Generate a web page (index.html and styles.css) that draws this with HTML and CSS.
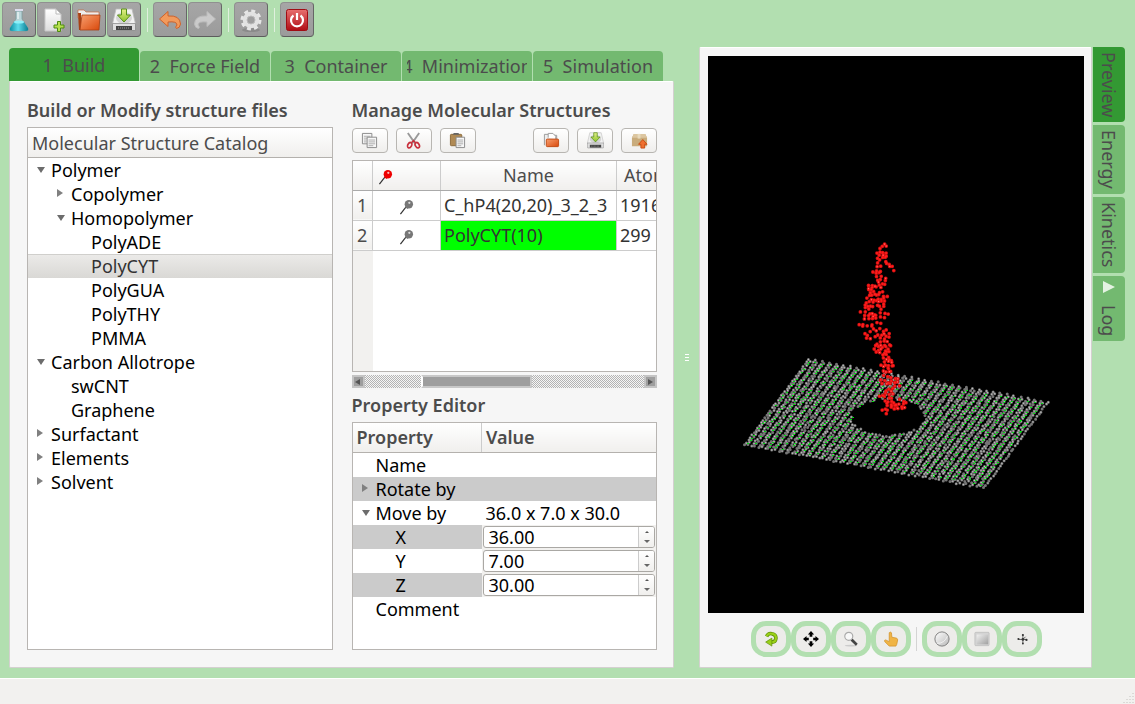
FILE: index.html
```html
<!DOCTYPE html>
<html lang="en">
<head>
<meta charset="utf-8">
<title>Molecular Builder</title>
<link rel="stylesheet" href="styles.css">
</head>
<body>
<svg class="defs" aria-hidden="true">
  <defs>
    <linearGradient id="gOrange" x1="0" y1="0" x2="1" y2="1"><stop offset="0" stop-color="#f8a070"/><stop offset="1" stop-color="#d9480a"/></linearGradient>
    <linearGradient id="gPaper" x1="0" y1="0" x2="0" y2="1"><stop offset="0" stop-color="#fff"/><stop offset="1" stop-color="#dcdcdc"/></linearGradient>
    <linearGradient id="gGreen" x1="0" y1="0" x2="0" y2="1"><stop offset="0" stop-color="#e4f08a"/><stop offset="1" stop-color="#8cc42a"/></linearGradient>
    <linearGradient id="gRed" x1="0" y1="0" x2="0" y2="1"><stop offset="0" stop-color="#e87070"/><stop offset="1" stop-color="#b00c14"/></linearGradient>
    <linearGradient id="gLiquid" x1="0" y1="0" x2="1" y2="0"><stop offset="0" stop-color="#0a8ca0"/><stop offset=".45" stop-color="#5cdcec"/><stop offset="1" stop-color="#0a7c90"/></linearGradient>
    <linearGradient id="gSteel" x1="0" y1="0" x2="1" y2="1"><stop offset="0" stop-color="#fff"/><stop offset="1" stop-color="#b8b8b8"/></linearGradient>
    <linearGradient id="gCube" x1="0" y1="0" x2="1" y2="1"><stop offset="0" stop-color="#f0f0f0"/><stop offset="1" stop-color="#a0a0a0"/></linearGradient>
    <symbol id="drive" viewBox="0 0 24 24">
      <path d="M4 1h16l3.500 15H.5z" fill="#f2f2f2" stroke="#bbb" stroke-width=".8"/>
      <ellipse cx="12" cy="10" rx="8" ry="6" fill="#d4d4d4"/>
      <path d="M.5 15.500h23v6q0 1-1 1h-21q-1 0-1-1z" fill="#dedede" stroke="#777" stroke-width=".6"/>
      <path d="M4 18h16v4H4z" fill="#444"/><path d="M6 20h12" stroke="#999" stroke-dasharray="1 1"/>
      <path d="M9.500 1h5v6h4L12 14 5.500 7h4z" fill="url(#gGreen)" stroke="#589018"/>
    </symbol>
    <symbol id="folder" viewBox="0 0 24 24">
      <path d="M1 5V2h6l2 2h13v6H1z" fill="#eee" stroke="#c76a40" stroke-width=".7"/>
      <path d="M1 5h3v17H2z" fill="#a84014"/>
      <path d="M5 7h18l-1 15H3z" fill="url(#gOrange)" stroke="#a84014" stroke-width=".8"/>
    </symbol>
    <symbol id="pin" viewBox="0 0 16 16">
      <path d="M1.500 15.500L9 6" stroke="#333" stroke-width="1.300"/><path d="M7.500 7l2.500 2" stroke="currentColor" stroke-width="3"/>
      <circle cx="10.500" cy="5" r="4.500" fill="currentColor"/><circle cx="11" cy="3.500" r="1.200" fill="#fff" opacity=".75"/>
    </symbol>
    <symbol id="docs" viewBox="0 0 18 18">
      <path d="M1.500 1.500h10v11h-10z" fill="#f7f7f7" stroke="#888"/>
      <path d="M3 4.500h7M3 6.500h7M3 8.500h3M3 10.500h3" stroke="#aaa"/>
      <path d="M6.500 5.500h10v11h-10z" fill="#f7f7f7" stroke="#888"/>
      <path d="M8 8.500h7M8 10.500h7M8 12.500h7M8 14.500h5" stroke="#aaa"/>
    </symbol>
  </defs>
</svg>

<header class="toolbar" role="toolbar" aria-label="Main">
  <button class="tool" aria-label="New project"><svg viewBox="0 0 24 24"><path d="M9 3h6v8l6 9q1 3-2 3H5q-3 0-2-3l6-9z" fill="#b9d4d8" stroke="#7c9ca0" stroke-width=".8"/><path d="M7 14h10l4 6q1 3-2 3H5q-3 0-2-3z" fill="url(#gLiquid)"/><ellipse cx="12" cy="14" rx="5" ry="1.500" fill="#8ef0f8"/><path d="M8 2h8" stroke="#dde" stroke-width="2"/><path d="M11 4v7" stroke="#fff"/></svg></button>
  <button class="tool" aria-label="New file"><svg viewBox="0 0 24 24"><path d="M3 1h11l5 5v17H3z" fill="url(#gPaper)" stroke="#c8c8c8"/><path d="M14 1v5h5z" fill="#fff" stroke="#bbb"/><path d="M15.500 13.500h3v3.500h3.500v3h-3.500v3.500h-3v-3.500H12v-3h3.500z" fill="#b6e04e" stroke="#4c8a10"/></svg></button>
  <button class="tool" aria-label="Open"><svg><use href="#folder"/></svg></button>
  <button class="tool" aria-label="Save"><svg><use href="#drive"/></svg></button>
  <span class="divider"></span>
  <button class="tool" aria-label="Undo"><svg viewBox="0 0 24 24"><path d="M1.500 11L10 3.500V8q12-1 12.500 8-.5 4-4 4.500-2-1 .5-3.500Q19 13 10 14v4.500z" fill="#f29a5c" stroke="#d0622a"/></svg></button>
  <button class="tool" aria-label="Redo"><svg viewBox="0 0 24 24"><path d="M22.500 11L14 3.500V8Q2 7 1.500 16q.5 4 4 4.500 2-1-.5-3.500Q5 13 14 14v4.500z" fill="#cacaca" stroke="#bcbcbc"/></svg></button>
  <span class="divider"></span>
  <button class="tool" aria-label="Settings"><svg viewBox="0 0 24 24"><ellipse cx="12" cy="22" rx="9" ry="2" fill="#777" opacity=".5"/><circle cx="12" cy="12" r="8.500" fill="none" stroke="#e6e6e6" stroke-width="4" stroke-dasharray="3.700 2.970"/><circle cx="12" cy="12" r="6" fill="none" stroke="#e2e2e2" stroke-width="4.500"/><circle cx="12" cy="12" r="4" fill="#9e9e9e" stroke="#bbb"/></svg></button>
  <span class="divider"></span>
  <button class="tool" aria-label="Quit"><svg viewBox="0 0 24 24"><rect x="1.500" y="1.500" width="21" height="21" rx="2" fill="url(#gRed)" stroke="#a00c14"/><path d="M8.500 7.500a6 6 0 1 0 7 0M12 5v7" fill="none" stroke="#fff" stroke-width="2.200"/></svg></button>
</header>

<main class="workspace">
  <section class="builder">
    <div class="tabs" role="tablist">
      <button class="tab tab-on" role="tab" aria-selected="true"><span>1  Build</span></button>
      <button class="tab" role="tab"><span>2  Force Field</span></button>
      <button class="tab" role="tab"><span>3  Container</span></button>
      <button class="tab" role="tab"><span>4  Minimization</span></button>
      <button class="tab" role="tab"><span>5  Simulation</span></button>
    </div>
    <div class="panel columns">
      <section class="column">
        <h2 class="heading">Build or Modify structure files</h2>
        <div class="box grow">
          <div class="box-head"><span class="head-cell">Molecular Structure Catalog</span></div>
          <ul class="tree">
            <li class="lv1 open">Polymer</li>
            <li class="lv2 shut">Copolymer</li>
            <li class="lv2 open">Homopolymer</li>
            <li class="lv3">PolyADE</li>
            <li class="lv3 picked">PolyCYT</li>
            <li class="lv3">PolyGUA</li>
            <li class="lv3">PolyTHY</li>
            <li class="lv3">PMMA</li>
            <li class="lv1 open">Carbon Allotrope</li>
            <li class="lv2">swCNT</li>
            <li class="lv2">Graphene</li>
            <li class="lv1 shut">Surfactant</li>
            <li class="lv1 shut">Elements</li>
            <li class="lv1 shut">Solvent</li>
          </ul>
        </div>
      </section>

      <section class="column">
        <h2 class="heading">Manage Molecular Structures</h2>
        <div class="actions">
          <button class="action" aria-label="Copy"><svg><use href="#docs"/></svg></button>
          <button class="action" aria-label="Cut"><svg viewBox="0 0 18 18"><path d="M3 1l7.500 11M15 1L7.500 12" stroke="#999" stroke-width="2"/><ellipse cx="5" cy="14" rx="2" ry="3" transform="rotate(30 5 14)" fill="none" stroke="#c8303c" stroke-width="1.800"/><ellipse cx="13" cy="14" rx="2" ry="3" transform="rotate(-30 13 14)" fill="none" stroke="#c8303c" stroke-width="1.800"/><path d="M7 11l2-2 2 2" fill="none" stroke="#c8303c" stroke-width="1.500"/></svg></button>
          <button class="action" aria-label="Paste"><svg viewBox="0 0 18 18"><rect x="1.500" y="2.500" width="12" height="12" rx="1" fill="#b08a54" stroke="#8a6838"/><path d="M4 3l1-2h5l1 2z" fill="#666"/><path d="M7.500 5.500h9v11h-9z" fill="#f7f7f7" stroke="#888"/><path d="M9 8.500h6M9 10.500h6M9 12.500h6M9 14.500h4" stroke="#aaa"/></svg></button>
          <span class="spring"></span>
          <button class="action" aria-label="Open structure"><svg viewBox="0 0 18 18"><path d="M1.500 14V2.500h4l1 1h8V9" fill="#eee" stroke="#999"/><path d="M5.500 6V1.500h5l3 3V8" fill="#fff" stroke="#999"/><rect x="3.500" y="7.500" width="13" height="8" rx="1" fill="url(#gOrange)" stroke="#c04a14"/></svg></button>
          <button class="action" aria-label="Save structure"><svg><use href="#drive"/></svg></button>
          <button class="action" aria-label="Export"><svg viewBox="0 0 18 18"><path d="M3 2h12l2 4v9H1V6z" fill="#c9ac7c"/><path d="M3 2h12l2 4H1z" fill="#dcc6a0"/><path d="M7 2h3v5H7z" fill="#e8dabc"/><path d="M12.500 8l4.500 5h-2.500v4h-4v-4H8z" fill="#f07030" stroke="#c84c10"/></svg></button>
        </div>
        <div class="box structures">
          <table class="grid">
            <colgroup><col class="c-num"><col class="c-pin"><col class="c-name"><col class="c-atoms"></colgroup>
            <thead><tr><th></th><th class="pin-head"><svg class="pin red"><use href="#pin"/></svg></th><th>Name</th><th class="cut">Atoms</th></tr></thead>
            <tbody>
              <tr><th>1</th><td class="mid"><svg class="pin"><use href="#pin"/></svg></td><td>C_hP4(20,20)_3_2_3</td><td>1916</td></tr>
              <tr><th>2</th><td class="mid"><svg class="pin"><use href="#pin"/></svg></td><td class="lime">PolyCYT(10)</td><td>299</td></tr>
            </tbody>
          </table>
          <div class="gutter"></div>
        </div>
        <div class="scroll">
          <button class="scroll-btn" aria-label="Scroll left"><svg viewBox="0 0 8 8"><path d="M6 1v6L1 4z"/></svg></button>
          <span class="track-a"></span><span class="thumb"></span><span class="track-b"></span>
          <button class="scroll-btn" aria-label="Scroll right"><svg viewBox="0 0 8 8"><path d="M2 1v6l5-3z"/></svg></button>
        </div>
        <h2 class="heading">Property Editor</h2>
        <div class="box grow">
          <table class="props">
            <colgroup><col class="p-key"><col></colgroup>
            <thead><tr><th>Property</th><th>Value</th></tr></thead>
            <tbody>
              <tr><td class="lv1">Name</td><td></td></tr>
              <tr class="alt"><td class="lv1 shut">Rotate by</td><td></td></tr>
              <tr><td class="lv1 open">Move by</td><td>36.0 x 7.0 x 30.0</td></tr>
              <tr class="altkey"><td class="lv2"><label for="px">X</label></td><td class="edit"><div class="spin"><input id="px" value="36.00"><span class="steps"><button aria-label="Increase X"></button><button class="down" aria-label="Decrease X"></button></span></div></td></tr>
              <tr><td class="lv2"><label for="py">Y</label></td><td class="edit"><div class="spin"><input id="py" value="7.00"><span class="steps"><button aria-label="Increase Y"></button><button class="down" aria-label="Decrease Y"></button></span></div></td></tr>
              <tr class="altkey"><td class="lv2"><label for="pz">Z</label></td><td class="edit"><div class="spin"><input id="pz" value="30.00"><span class="steps"><button aria-label="Increase Z"></button><button class="down" aria-label="Decrease Z"></button></span></div></td></tr>
              <tr><td class="lv1">Comment</td><td></td></tr>
            </tbody>
          </table>
        </div>
      </section>
    </div>
  </section>

  <div class="splitter"><i></i><i></i><i></i></div>

  <section class="panel viewer">
    <svg class="scene" id="scene" viewBox="0 0 376 557" role="img" aria-label="Molecule preview"></svg>
    <div class="view-tools">
      <button class="view-btn" aria-label="Rotate"><svg viewBox="0 0 18 18"><path d="M4 6Q6 2 10 3q5 1 4.500 5.500T9 12.500" fill="none" stroke="#5f8f08" stroke-width="4"/><path d="M4 6Q6 2 10 3q5 1 4.500 5.500T9 12.500" fill="none" stroke="#9ad018" stroke-width="2.400"/><path d="M10 8v9l-7-4.500z" fill="#9ad018" stroke="#5f8f08" stroke-width=".8"/></svg></button>
      <button class="view-btn" aria-label="Move"><svg viewBox="0 0 18 18"><path d="M9 0l3.500 4h-2v2.500h-3V4h-2zM9 18l3.500-4h-2v-2.500h-3V14h-2zM0 9l4-3.500v2h2.500v3H4v2zM18 9l-4-3.500v2h-2.500v3H14v2z"/></svg></button>
      <button class="view-btn" aria-label="Zoom"><svg viewBox="0 0 18 18"><ellipse cx="9" cy="16.500" rx="7" ry="1" fill="#ccc"/><path d="M9.500 9.500l6 6" stroke="#444" stroke-width="3"/><circle cx="6.500" cy="6" r="4.500" fill="#f8f8f8" stroke="#aaa" stroke-width="1.300"/></svg></button>
      <button class="view-btn" aria-label="Pick"><svg viewBox="0 0 18 18"><path d="M7 2q1.500-1.500 2.500 0l.5 5 5 1q1.500.5 1.500 2l-1 5-1 2H7l-5-5q-1-2 1-2l4 2z" fill="#f0b445" stroke="#d09028" stroke-width=".8"/></svg></button>
      <span class="divider dark"></span>
      <button class="view-btn" aria-label="Sphere"><svg viewBox="0 0 18 18"><circle cx="9" cy="9" r="8" fill="url(#gSteel)" stroke="#777"/><path d="M3 14q9 0 12-8" fill="none" stroke="#fff" stroke-width="1" opacity=".7"/></svg></button>
      <button class="view-btn" aria-label="Box"><svg viewBox="0 0 18 18"><rect x="1" y="1.500" width="16" height="15" rx="1" fill="#d4d4d4" stroke="#bbb" stroke-width=".8"/><rect x="3" y="4" width="13" height="11" fill="url(#gCube)"/></svg></button>
      <button class="view-btn" aria-label="Axes"><svg viewBox="0 0 18 18"><path d="M10 4v11M5 9.500h9M10 9.500l3-3" stroke="#555"/><g fill="#333"><circle cx="10" cy="4.500" r="1.200"/><circle cx="10" cy="14" r="1"/><circle cx="5" cy="9" r="1.200"/><circle cx="14" cy="10" r="1.300"/><circle cx="10" cy="9.500" r="1.500"/></g></svg></button>
    </div>
  </section>

  <nav class="side-tabs" role="tablist">
    <button class="side side-on" role="tab" aria-selected="true">Preview</button>
    <button class="side" role="tab">Energy</button>
    <button class="side" role="tab">Kinetics</button>
    <button class="side" role="tab"><svg class="play" viewBox="0 0 12 12"><path d="M0 0l12 6-12 6z" fill="#e4f2e2"/></svg>Log</button>
  </nav>
</main>

<footer class="status"><svg class="grip" viewBox="0 0 12 12"><path d="M10 1v11M7 4v8M4 7v5M1 10v2" stroke="#c4c2be" stroke-dasharray="1 2"/></svg></footer>
<script src="scene.js"></script>
</body>
</html>
```
FILE: styles.css
```css
* { box-sizing: border-box; }
body {
  margin: 0;
  min-height: 100vh;
  display: flex;
  flex-direction: column;
  background: #b2dfb0;
  font: 18px/24px "Noto Sans", "Open Sans", sans-serif;
  color: #000;
}
button, input { font: inherit; color: inherit; padding: 0; margin: 0; }
.defs { position: absolute; width: 0; height: 0; }

.toolbar { display: flex; align-items: center; gap: 1px; padding: 2px; height: 39px; }
.tool {
  display: grid; place-items: center;
  width: 34px; height: 35px;
  background: linear-gradient(#a6a6a6, #9b9b9b);
  border: 1px solid #888; border-color: #909090 #666 #5c5c5c #909090;
  border-radius: 4px;
}
.tool svg { width: 24px; height: 24px; }
.divider { width: 1px; height: 24px; margin: 0 4px 0 5px; background: #e0f0de; }
.dark { background: #d4d4d4; }

.workspace {
  flex: 1;
  display: grid;
  grid-template-columns: minmax(0, 665fr) 25px minmax(0, 393fr) 33px;
  padding: 8px 10px 10px 9px;
}
.builder { display: flex; flex-direction: column; }
.tabs { display: flex; align-items: flex-end; gap: 1px; height: 34px; padding: 1px 11px 0 0; }
.tab {
  flex: 1 1 0; min-width: 0; height: 30px; padding: 0 5px;
  background: #73b970; color: #4c4c4c;
  border: 0; border-radius: 4px 4px 0 0;
}
.tab span { display: flex; justify-content: center; overflow: hidden; white-space: pre; }
.tab-on { height: 33px; background: #339933; }
.panel { background: #f6f6f6; border: 1px solid #d4d0d0; border-top-color: #fff; border-radius: 2px; }
.columns { flex: 1; display: grid; grid-template-columns: 1fr 1fr; gap: 19px; padding: 17px 16px 17px 17px; }
.column { display: flex; flex-direction: column; min-width: 0; }
.heading { margin: 0 0 6px; font-size: 18px; line-height: 22px; font-weight: 600; color: #4c4c4c; white-space: nowrap; }

.box { background: #fff; border: 1px solid #b8b5b2; overflow: hidden; }
.grow { flex: 1; }
.box-head { height: 30px; background: linear-gradient(#fff, #f0efed); border-bottom: 1px solid #b4b1ad; color: #4c4c4c; }
.head-cell { display: block; padding: 3px 4px; }
.tree { list-style: none; margin: 0; padding: 0; }
.lv1 { padding-left: 23px; }
.lv2 { padding-left: 43px; }
.lv3 { padding-left: 63px; }
.open::before, .shut::before {
  content: ""; display: inline-block; margin: 0 8px 0 -14px;
  border: solid transparent; vertical-align: 4px;
}
.open::before { border-width: 6px 4px 0; border-top-color: #6c6c6c; margin-right: 6px; }
.shut::before { border-width: 4px 0 4px 6px; border-left-color: #808080; }
.picked { background: linear-gradient(#ebeae8, #d9d8d5); border-top: 1px solid #d0cfcc; color: #333; line-height: 23px; }

.actions { display: flex; gap: 8px; margin: 1px 0 7px; }
.action {
  display: grid; place-items: center; width: 36px; height: 25px;
  background: linear-gradient(#fff, #efeeec);
  border: 1px solid #b8b6b2; border-radius: 4px;
}
.action svg { width: 17px; height: 17px; }
.spring { flex: 1; margin-right: -8px; }

.structures { height: 212px; display: flex; flex-direction: column; }
.grid { width: 320px; table-layout: fixed; border-collapse: collapse; color: #333; }
.grid tr { height: 30px; }
.grid thead tr { height: 29px; }
.grid th, .grid td { border: 1px solid #ccc; padding: 0 3px; white-space: nowrap; overflow: hidden; }
.grid tr > :first-child { border-left: 0; }
.grid th { font-weight: 400; background: linear-gradient(#fff, #f0efed); color: #4c4c4c; padding: 0; }
.grid thead th { border-top: 0; border-bottom-color: #aaa; }
.grid .cut { text-align: left; padding-left: 7px; }
.grid .pin-head { text-align: left; padding-left: 5px; }
.grid .mid { text-align: center; }
.grid .lime { background: #0f0; }
.c-num { width: 20px; } .c-pin { width: 68px; } .c-name { width: 176px; }
.pin { width: 15px; height: 16px; display: inline-block; vertical-align: middle; color: #777; }
.red { color: #e00; }
.gutter { flex: 1; width: 20px; background: #f2f1ef; }

.scroll {
  display: flex; height: 13px; margin: 3px 0 6px;
  background: repeating-conic-gradient(#b4b4b4 0 25%, #f6f6f6 0 50%) 0 0 / 2px 2px;
}
.scroll-btn { display: grid; place-items: center; width: 13px; height: 13px; background: #9e9e9e; border: 2px solid #c4c4c4; }
.scroll-btn svg { width: 8px; height: 8px; fill: #555; }
.track-a { flex: 57; } .track-b { flex: 113; }
.thumb { flex: 109; background: #9e9e9e; border: 2px solid #c8c8c8; border-left-color: #fff; }

.props { width: 100%; table-layout: fixed; border-collapse: collapse; }
.p-key { width: 129px; }
.props th {
  height: 29px; padding: 0 4px; text-align: left; font-weight: 600; color: #4c4c4c;
  background: linear-gradient(#fff, #f0efed); border-bottom: 1px solid #b4b1ad;
}
.props th:first-child { border-right: 1px solid #ccc; }
.props td { height: 24px; padding-top: 0; padding-bottom: 0; padding-right: 0; white-space: nowrap; }
.props td:last-child { padding-left: 4px; }
.alt td, .altkey td:first-child { background: #cbcbcb; }
.props .edit { background: #f2f1ef; }
.props td.edit:last-child { padding: 0 1px; }
.spin { display: flex; height: 22px; border: 1px solid #aaa8a4; border-radius: 3px; background: #fff; overflow: hidden; }
.spin input { flex: 1; min-width: 0; border: 0; background: none; padding: 0 5px; }
.steps { display: flex; flex-direction: column; width: 16px; border-left: 1px solid #ccc; background: linear-gradient(#fff, #f0efed); }
.steps button { flex: 1; display: grid; place-items: center; border: 0; background: none; }
.steps button::before { content: ""; border: solid transparent; border-width: 0 2px 2px; border-bottom-color: #555; }
.steps .down::before { border-width: 3px 3px 0; border-top-color: #666; }

.splitter { display: flex; flex-direction: column; justify-content: center; align-items: center; gap: 2px; }
.splitter i { width: 4px; height: 1px; background: #fff; }

.viewer { display: flex; flex-direction: column; padding: 8px 7px 10px 8px; }
.scene { flex: 1; min-height: 0; width: 100%; background: #000; }
.view-tools { display: flex; justify-content: center; align-items: center; padding-top: 8px; }
.view-btn {
  display: grid; place-items: center; width: 40px; height: 36px;
  background: #edecea; border: 5px solid #b2dfb0; border-radius: 15px;
}
.view-btn svg { width: 16px; height: 16px; }
.view-tools .divider { margin: 0 5px; }

.side-tabs { display: flex; flex-direction: column; align-items: flex-end; gap: 3px; }
.side {
  writing-mode: vertical-rl; width: 32px; padding: 5px 0; text-align: start;
  background: #73b970; color: #4c4c4c; border: 0; border-radius: 0 4px 4px 0;
}
.side-on { background: #339933; }
.play { width: 12px; height: 12px; margin-bottom: 12px; }

.status { display: flex; justify-content: flex-end; align-items: flex-end; height: 26px; background: #f2f1ef; border-top: 1px solid #fff; }
.grip { width: 12px; height: 12px; }
```
FILE: scene.js
```js
const scene = document.getElementById("scene");

let seed = 7;
const rnd = () => (seed = (seed * 16807) % 2147483647) / 2147483647;

function dots(points, colour, size, dash = 0.01, cap = "round") {
  const p = document.createElementNS("http://www.w3.org/2000/svg", "path");
  p.setAttribute("d", points.map(([x, y]) => `M${x.toFixed(1)} ${y.toFixed(1)}h${dash}`).join(""));
  p.setAttribute("stroke", colour);
  p.setAttribute("stroke-width", size);
  p.setAttribute("stroke-linecap", cap);
  scene.appendChild(p);
}

// Graphene sheet: a skewed honeycomb with an elliptical pore.
const cells = 35;
const grey = [], light = [], green = [];
for (let i = 0; i <= cells; i++) {
  for (let j = 0; j <= cells; j++) {
    for (const k of [0, 0.33]) {
      const u = (i + k) / cells, v = (j - k) / cells;
      if (u > 1 || v < 0) continue;
      const x = 101 + 239 * u - 64 * v + rnd() * 1.2 - 0.6;
      const y = 303 + 43 * u + 86 * v + rnd() * 1.2 - 0.6;
      if (((x - 180) / 36) ** 2 + ((y - 361) / 18) ** 2 < 1) continue;
      grey.push([x, y]);
      if (rnd() < 0.6) light.push([x, y]);
      if (!k && u < 0.98 && v < 0.98 && v > 0.02 && rnd() < 0.7) green.push([Math.round(x + 1), Math.round(y) + 0.5]);
    }
  }
}
dots(grey, "#757575", 3);
dots(light, "#c0c0c0", 1.4);
dots(green, "#00e010", 1, 2, "butt");

// Polymer strand: rows of [y, left, right] in thirds of a unit.
const rows = [
  [30, 130, 136], [38, 118, 140], [50, 110, 140], [60, 115, 142], [70, 112, 140], [78, 134, 144],
  [88, 110, 118], [88, 138, 152], [97, 108, 128], [97, 148, 160], [106, 97, 130], [106, 160, 164],
  [115, 105, 130], [125, 108, 142], [134, 110, 142], [143, 112, 130], [150, 85, 135], [158, 82, 130],
  [168, 85, 112], [175, 90, 130], [183, 88, 147], [192, 78, 135], [201, 75, 135], [210, 72, 140],
  [219, 75, 95], [219, 120, 138], [235, 60, 105], [235, 120, 148], [244, 72, 140], [254, 72, 118],
  [265, 55, 80], [265, 95, 125], [275, 66, 108], [285, 88, 145], [299, 72, 84], [299, 112, 148],
  [310, 78, 106], [310, 120, 150], [318, 120, 155], [326, 110, 155], [336, 106, 152], [345, 100, 155],
  [354, 105, 155], [363, 125, 150], [372, 130, 160], [380, 130, 158], [388, 122, 170], [396, 130, 165],
  [404, 130, 160], [413, 135, 155], [422, 130, 155], [432, 120, 135], [432, 150, 184], [441, 122, 182],
  [450, 140, 180], [459, 145, 172], [468, 135, 160], [478, 128, 160], [488, 118, 158], [496, 135, 155],
  [496, 178, 196], [506, 140, 205], [514, 140, 200], [521, 140, 190], [527, 124, 142], [538, 136, 142]
];
const red = [];
for (const [y, a, b] of rows) {
  for (let x = a + rnd() * 4; x <= b; x += 6 + rnd() * 9) {
    red.push([132 + x / 3, 179 + (y + rnd() * 10 - 5) / 3]);
  }
}
dots(red, "#d01010", 3.8);
dots(red, "#ff1c1c", 2.2);
dots(red.filter(() => rnd() < 0.15), "#ff8a8a", 1);
```
